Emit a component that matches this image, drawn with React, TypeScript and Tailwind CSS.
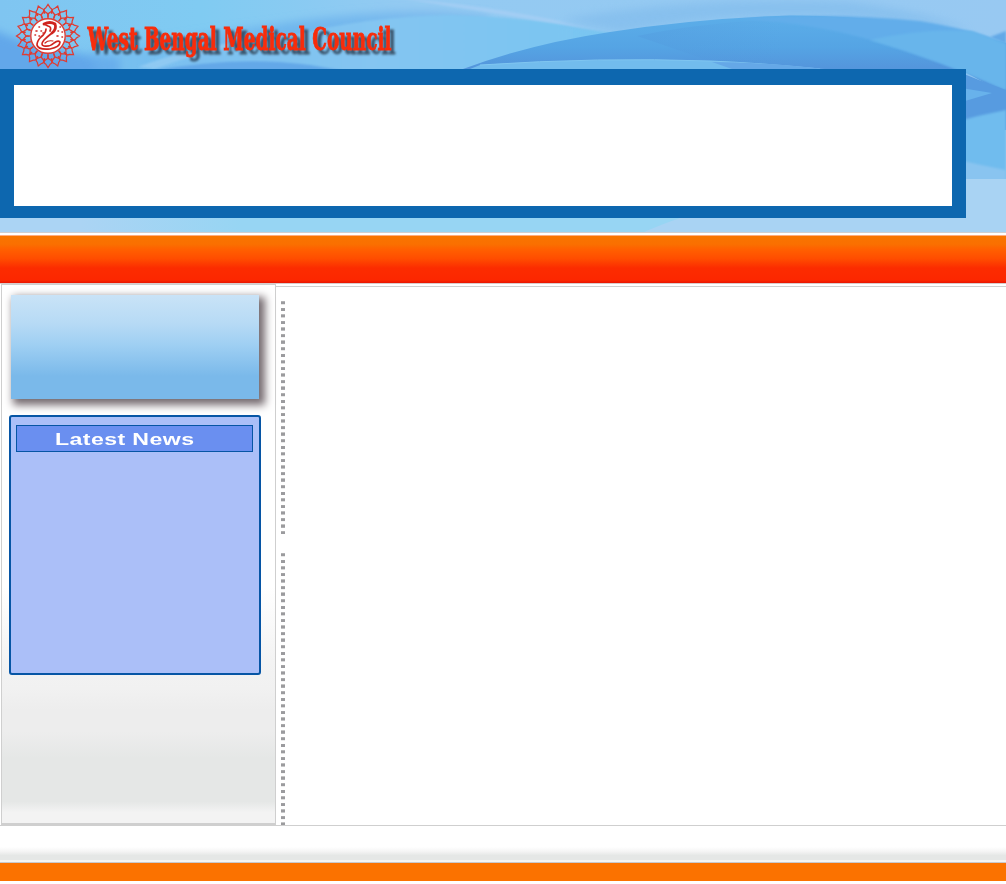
import React from "react";

const petals = Array.from({ length: 20 }, (_, i) => i * 18);

function HeaderArt() {
  return (
    <svg className="absolute inset-0 h-full w-full" viewBox="0 0 1006 232" preserveAspectRatio="none" aria-hidden="true">
      <defs>
        <filter id="soft" x="-10%" y="-30%" width="120%" height="160%">
          <feGaussianBlur stdDeviation="4" />
        </filter>
        <filter id="edge">
          <feGaussianBlur stdDeviation="0.8" />
        </filter>
        <linearGradient id="sky" x1="0" y1="0" x2="1" y2="0">
          <stop offset="0" stopColor="#7fc5f1" />
          <stop offset="0.2" stopColor="#80cbf2" />
          <stop offset="0.4" stopColor="#93caf2" />
          <stop offset="1" stopColor="#98c9f2" />
        </linearGradient>
        <linearGradient id="mid" x1="0" y1="0" x2="1" y2="0">
          <stop offset="0" stopColor="#7abff0" />
          <stop offset="0.5" stopColor="#84c5f1" />
          <stop offset="1" stopColor="#79c6f1" />
        </linearGradient>
        <linearGradient id="deep" x1="0" y1="0" x2="0" y2="1">
          <stop offset="0" stopColor="#5caee9" />
          <stop offset="0.4" stopColor="#55a4e4" />
          <stop offset="0.65" stopColor="#5496dc" />
        </linearGradient>
        <linearGradient id="shade" x1="0" y1="0" x2="1" y2="0">
          <stop offset="0" stopColor="#5297dc" stopOpacity=".35" />
          <stop offset="0.6" stopColor="#5297dc" stopOpacity="0" />
        </linearGradient>
        <linearGradient id="base" x1="0" y1="0" x2="1" y2="0">
          <stop offset="0" stopColor="#abd4f4" />
          <stop offset="0.08" stopColor="#abd4f4" />
          <stop offset="0.24" stopColor="#97d5f3" />
          <stop offset="0.62" stopColor="#97d5f3" />
        </linearGradient>
        <linearGradient id="band" x1="0" y1="0" x2="1" y2="0">
          <stop offset="0" stopColor="#6fb6ed" stopOpacity=".4" />
          <stop offset="0.5" stopColor="#6fb6ed" />
          <stop offset="1" stopColor="#80bcee" />
        </linearGradient>
      </defs>
      <rect width="1006" height="232" fill="url(#sky)" />
      <path d="M-10 28 Q40 52 120 58 V80 H-10Z" fill="#62a7ea" filter="url(#soft)" />
      <path d="M88 52 Q190 34 270 25 Q380 8 450 12 L490 16 L470 60 L300 80 H100Z" fill="url(#band)" filter="url(#soft)" />
      <path d="M290 36 Q370 16 450 15 Q540 17 612 33 L540 75 H130 Q230 44 290 36Z" fill="url(#mid)" filter="url(#edge)" />
      <path d="M138 67 Q200 43 290 36 Q210 48 155 69Z" fill="#9dd0f4" opacity=".65" filter="url(#edge)" />
      <path d="M150 71 Q240 55 310 65 L345 71Z" fill="#63a8e8" filter="url(#edge)" />
      <path d="M400 -2 Q480 5 550 19 L614 33 Q560 24 480 11 Q430 3 400 -2Z" fill="#a3cef4" filter="url(#edge)" />
      <path d="M560 20 Q690 -4 850 2 Q930 13 970 31 Q820 5 680 23 L620 32Z" fill="#84beed" opacity=".8" filter="url(#soft)" />
      <path d="M990 37 L1006 31 V44Z" fill="#64a9e7" filter="url(#edge)" />
      <path d="M463 69 Q530 44 610 32 Q700 18 790 15.5 Q900 15 1006 43 V95 L960 69Z" fill="url(#deep)" />
      <path d="M637 36 Q687 53 732 69 H880 V20 Q740 14 637 36Z" fill="url(#shade)" />
      <path d="M740 19 Q830 12 920 21 Q970 29 1006 43 V90 Q960 69 915 54 Q830 23 740 19Z" fill="#62adea" filter="url(#edge)" />
      <path d="M870 40 Q920 28 972 31 L1006 44 V90 Q940 60 870 40Z" fill="#67b5eb" filter="url(#edge)" />
      <path d="M480 65 Q600 57 710 61 Q760 63 820 69 H470Z" fill="#72bced" />
      <path d="M480 65 Q600 57 710 61 Q760 63 820 69" fill="none" stroke="#7fc6f1" />
      <path d="M712 62 Q760 62 825 69 H732Z" fill="#65a8e7" />
      <path d="M950 68 Q980 81 1006 90 V130 H950Z" fill="#579be0" />
      <path d="M955 87 L992 93 L955 104Z" fill="#68b2eb" />
      <path d="M955 122 Q980 115 1006 110 V180 H955Z" fill="#6fbcee" filter="url(#edge)" />
      <path d="M950 158 Q980 165 1006 170 V182 H950Z" fill="#89c4f0" filter="url(#edge)" />
      <rect y="179" width="1006" height="53" fill="url(#base)" />
      <path d="M644 232 Q660 225 680 218 L710 212 V179 H1006 V232Z" fill="#a9d3f3" />
    </svg>
  );
}

function Emblem() {
  return (
    <svg className="h-[66px] w-[66px]" viewBox="-33 -33 66 66" fill="none" aria-hidden="true">
      <g stroke="#df3b32" strokeWidth="1.25" strokeLinejoin="miter">
        {petals.map((a) => (
          <g key={a} transform={`rotate(${a})`}>
            <path d="M-3.2 -22.5 Q-5.2 -27 -2.2 -28.2 L0 -31.5 L2.2 -28.2 Q5.2 -27 3.2 -22.5" />
            <path d="M-2.6 -18 Q-4.6 -21.5 -2 -23.3 L0 -25.5 L2 -23.3 Q4.6 -21.5 2.6 -18" transform="rotate(9)" />
          </g>
        ))}
      </g>
      <circle r="17.2" fill="#fff" stroke="#df3b32" strokeWidth="1.4" />
      <g stroke="#cf241e" strokeLinecap="round" strokeLinejoin="round">
        <path d="M-4 -12 Q2 -15 7 -12 Q9 -7 4 -3" strokeWidth="2.8" />
        <path d="M-4 -12 L0 -10 Q4 -9 2 -5 M4 -3 Q-1 1 -4 4 Q-8 9 -4 10 Q2 11 6 7 Q10 4 12 6 Q12 11 2 13 Q-10 14 -11 9 Q-11 5 -7 1 Q-2 -3 -2 -7" strokeWidth="1.7" />
        <path d="M-3 7 Q0 4 5 5" strokeWidth="1.2" />
        <path d="M-9 -9h.5M-12 -5h1M-7 -5h.5M-13 -1h.5M-9 0h.5M-5 -3h.5M12 -9h.5M10 -5h.5M14 -4h.5M9 0h1M14 1h.5" strokeWidth="1.6" />
      </g>
    </svg>
  );
}

function Brand() {
  return (
    <div className="relative flex h-[69px] items-start pl-[15px] pt-[3px]">
      <Emblem />
      <svg className="ml-1 h-16 w-[330px] overflow-visible [filter:drop-shadow(4px_4px_1.2px_rgba(45,65,85,.85))]" viewBox="0 0 330 64">
        <text x="2.5" y="46.5" textLength="304" lengthAdjust="spacingAndGlyphs" fill="#f82c0b" stroke="#f82c0b" strokeWidth=".9" fontFamily="'DejaVu Serif', serif" fontWeight="700" fontSize="32">
          West Bengal Medical Council
        </text>
      </svg>
    </div>
  );
}

const dash = "w-1 bg-[repeating-linear-gradient(to_bottom,#c9c9c9_0px,#9b9b9e_1px,#9b9b9e_3px,#dedede_3.4px,#fff_3.8px,#fff_6.57px)]";

export default function App() {
  return (
    <div className="flex h-[884px] w-[1006px] flex-col overflow-hidden bg-white font-['Liberation_Sans',Arial,sans-serif]">
      <header className="relative h-[232px] shrink-0 overflow-hidden">
        <HeaderArt />
        <Brand />
        <div className="relative h-[149px] w-[966px] border-x-[14px] border-b-[12px] border-t-[16px] border-[#0d67af] bg-white" />
      </header>
      <div className="h-1 shrink-0 border-y border-t-[#cfcfd2] border-b-[#ffad80] bg-white" />
      <nav className="h-[47px] shrink-0 bg-[linear-gradient(to_bottom,#f87500_0%,#fa6f00_18%,#ff6000_28%,#ff4d00_48%,#fc2c00_68%,#fc2700_94%,#e91500_100%)]" />
      <div className="h-px shrink-0 bg-[#d8cccc]" />
      <main className="flex h-[541px] shrink-0">
        <aside className="ml-px flex w-[275px] shrink-0 flex-col border border-b-2 border-[#cfcfcf] bg-[linear-gradient(to_bottom,#fff_0%,#fff_56%,#fafafa_62%,#f3f3f3_70%,#f1f1f1_75%,#ededed_79%,#ededed_83%,#e5e7e6_88%,#e5e7e6_96%,#f3f3f3_98%,#f3f3f3_100%)] pl-[7px] pt-[10px]">
          <div className="ml-[2px] h-[104px] w-[248px] shrink-0 bg-[linear-gradient(to_bottom,#c9e3f7_0%,#b6daf5_28%,#a0d0f3_47%,#7ab9ea_78%,#7ab9ea_100%)] shadow-[4px_4px_8px_2px_#756b70]" />
          <section className="mt-4 h-[260px] w-[252px] shrink-0 rounded-[3px] border-2 border-[#0655a5] bg-[#abbff8] pl-[5px] pt-2">
            <h2 className="flex h-[27px] w-[237px] items-center border border-[#0655a5] bg-[#6a8ff0] pl-[38px] pt-px">
              <span className="inline-block origin-left scale-x-[1.36] whitespace-nowrap text-[17px] font-bold leading-none tracking-[0.3px] text-white">Latest News</span>
            </h2>
          </section>
        </aside>
        <div className="flex min-w-0 flex-1 flex-col">
          <div className="mt-[2px] h-px shrink-0 bg-[#cfcfcf]" />
          <div className="ml-[5px] mt-[14px] flex flex-col gap-[19px]">
            <div className={dash + " h-[233px]"} />
            <div className={dash + " h-[272px]"} />
          </div>
        </div>
      </main>
      <footer className="flex shrink-0 flex-col">
        <div className="h-px bg-[#cfcfcf]" />
        <div className="h-9 bg-[linear-gradient(to_bottom,#fff_0%,#fff_58%,#f5f5f5_70%,#e5e7e6_82%,#e5e7e6_94%,#f4f4f4_96%,#f4f4f4_100%)]" />
        <div className="h-px bg-[#c8c8cc]" />
        <div className="h-[18px] bg-[#fb7200]" />
      </footer>
    </div>
  );
}
